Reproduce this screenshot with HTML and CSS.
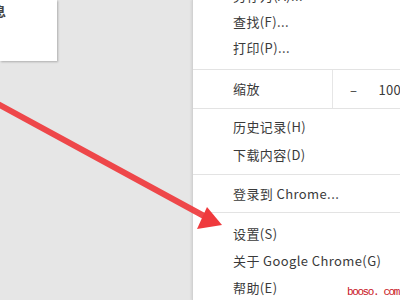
FILE: index.html
```html
<!DOCTYPE html>
<html lang="zh-CN">
<head>
    <meta charset="UTF-8">
    <title>Chrome 菜单</title>
    <link rel="stylesheet" href="styles.css">
</head>
<body>
    <div class="desk">
        <div class="side">
            <div class="note"><span class="note-text">消息</span></div>
        </div>
        <div class="menu">
            <div class="group first">
                <div class="item">另存为(A)...</div>
                <div class="item">查找(F)...</div>
                <div class="item">打印(P)...</div>
            </div>
            <div class="zoom">
                <div class="zoom-label">缩放</div>
                <div class="zoom-ctrl">
                    <span class="minus">–</span>
                    <span class="pct">100%</span>
                </div>
            </div>
            <div class="group second">
                <div class="item tall">历史记录(H)</div>
                <div class="item tall">下载内容(D)</div>
            </div>
            <div class="group third">
                <div class="item">登录到 Chrome...</div>
            </div>
            <div class="group fourth">
                <div class="item">设置(S)</div>
                <div class="item">关于 Google Chrome(G)</div>
                <div class="item">帮助(E)</div>
            </div>
        </div>
    </div>

    <svg class="arrow" width="400" height="300" viewBox="0 0 400 300">
        <line x1="-4" y1="103" x2="204" y2="216" stroke="#ef3a3d" stroke-width="6" stroke-linecap="round" opacity="0.92"/>
        <polygon points="222,225 207,207 197,229" fill="#ef3a3d"/>
    </svg>

    <div class="mark">booso. com</div>
</body>
</html>
```

FILE: styles.css
```css
body {
    margin: 0;
    width: 400px;
    height: 300px;
    overflow: hidden;
    background: #e6e6e6;
    font-family: "Noto Sans CJK SC", "Noto Sans", sans-serif;
    color: #3a3a3a;
}
.desk {
    display: flex;
    height: 300px;
}
.side {
    width: 192px;
    flex-shrink: 0;
}
.note {
    width: 57px;
    height: 61px;
    background: #fff;
    box-shadow: 1px 1px 2px rgba(0,0,0,0.25);
    overflow: hidden;
}
.note-text {
    display: block;
    margin: 1px 0 0 -20px;
    font-size: 13px;
    font-weight: bold;
    color: #444;
}
.menu {
    flex: 1;
    min-width: 0;
    overflow: hidden;
    background: #fff;
    border-left: 1px solid #d2d2d2;
    box-shadow: -1px 0 2px rgba(0,0,0,0.08);
    font-size: 13px;
    letter-spacing: 0.4px;
}
.group {
    border-bottom: 1px solid #e3e3e3;
}
.group.first {
    margin-top: -17px;
    padding-bottom: 8px;
}
.group.second {
    padding: 4px 0 5px;
}
.group.third {
    padding: 6px 0 6px;
}
.group.fourth {
    padding-top: 7px;
    border-bottom: none;
}
.item {
    height: 26px;
    line-height: 26px;
    padding-left: 40px;
    white-space: nowrap;
}
.item.tall {
    height: 28px;
    line-height: 28px;
}
.group.third .item {
    height: 25px;
    line-height: 25px;
}
.group.fourth .item {
    height: 27px;
    line-height: 27px;
}
.zoom {
    display: flex;
    height: 38px;
    border-bottom: 1px solid #e3e3e3;
}
.zoom-label {
    width: 99px;
    flex-shrink: 0;
    padding-left: 40px;
    line-height: 38px;
    border-right: 1px solid #e6e6e6;
}
.zoom-ctrl {
    display: flex;
    align-items: center;
    gap: 21px;
    padding-left: 17px;
    white-space: nowrap;
}
.arrow {
    position: absolute;
    left: 0;
    top: 0;
}
.mark {
    position: absolute;
    left: 347px;
    top: 286px;
    white-space: nowrap;
    font-family: "Liberation Mono", monospace;
    font-size: 11px;
    line-height: 13px;
    color: #c8141e;
    letter-spacing: -1.4px;
}
```
